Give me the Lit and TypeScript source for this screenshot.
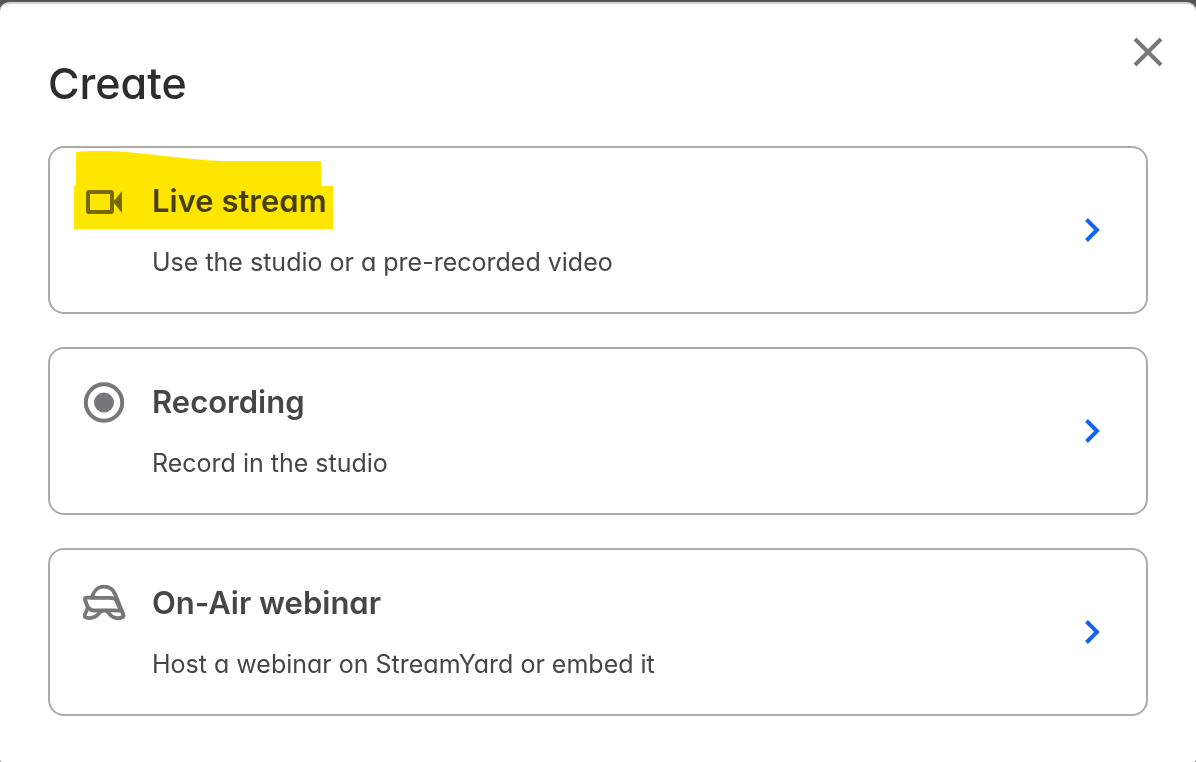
import { LitElement, html, css, svg } from "lit";
import { customElement } from "lit/decorators.js";

const camera = svg`<rect x="6" y="14" width="24" height="20" rx="1" fill="none" stroke="currentColor" stroke-width="4" /><path d="M31 24 40 13V35Z" fill="currentColor" />`;

const record = svg`<circle cx="22" cy="23.500" r="18.200" fill="none" stroke="currentColor" stroke-width="4" /><circle cx="22" cy="23.500" r="10" fill="currentColor" />`;

const turtle = svg`<g fill="none" stroke="currentColor" stroke-width="3.800" stroke-linejoin="round" stroke-linecap="round">
  <path d="M10 17.500C11.500 11 16 6.700 22 6.700C27.500 6.700 31.500 9.500 33.500 15L41 34" />
  <path d="M10 17.800H27C32 17.800 33.500 18.500 35 22C36.500 26 38 28.500 39.500 31C35 30 30 30.500 25 30.500H12C8 30.500 6 28 4.500 24C3.500 21 2.500 19.500 3 18C4.500 17 7 17.800 10 17.800Z" />
  <path d="M5.500 28C5 31.500 1.500 34.500 3 37C6 39 12 38 15 35.500C17 33.500 18 31.500 20.500 30.700" />
  <path d="M24.500 30.700C27 32 27.500 35.500 31 37C34 38.500 38 38.500 41 37C42 36 41.500 35 41 34" />
</g>`;

const items = [
  { title: "Live stream", text: "Use the studio or a pre-recorded video", icon: camera, marked: true },
  { title: "Recording", text: "Record in the studio", icon: record, marked: false },
  { title: "On-Air webinar", text: "Host a webinar on StreamYard or embed it", icon: turtle, marked: false },
];

@customElement("app-root")
export class AppRoot extends LitElement {
  static styles = css`
    :host {
      display: block;
      box-sizing: border-box;
      min-height: 100vh;
      background: #555;
      font-family: Inter, "Noto Sans", sans-serif;
      font-feature-settings: "cv11";
    }
    .dialog {
      box-sizing: border-box;
      min-height: 100vh;
      padding: 30px 48px 44px;
      border-top: 2px solid #555;
      background: #fff;
      background-clip: padding-box;
      border-radius: 10px 10px 2px 2px;
      box-shadow: inset 0 2px 0 #d4d4d4;
    }
    .header {
      display: flex;
      justify-content: space-between;
      align-items: flex-start;
      margin-right: -16px;
      height: 114px;
    }
    h1 {
      margin: 24px 0 0;
      font-size: 43px;
      line-height: 54px;
      font-weight: 550;
      color: #2d2d2e;
    }
    button {
      font: inherit;
      font-feature-settings: inherit;
      cursor: pointer;
    }
    .close {
      display: flex;
      padding: 4px 0;
      border: 0;
      background: none;
      color: #77777a;
    }
    .list {
      display: flex;
      flex-direction: column;
      gap: 33px;
    }
    .card {
      position: relative;
      display: flex;
      align-items: center;
      width: 100%;
      padding: 34px 44px 34px 32px;
      border: 2px solid #acacac;
      border-radius: 16px;
      background: #fff;
      text-align: left;
      color: #464648;
    }
    .icon {
      flex: none;
      align-self: flex-start;
      margin: -4px 26px 0 0;
      color: #77777a;
    }
    .body {
      flex: 1;
      display: flex;
      flex-direction: column;
      gap: 26px;
    }
    .title {
      font-size: 31px;
      line-height: 38px;
      font-weight: 600;
    }
    .text {
      font-size: 25px;
      line-height: 32px;
    }
    .chevron {
      flex: none;
      color: #1464f0;
    }
    .marker {
      position: absolute;
      left: 24px;
      top: 3px;
      mix-blend-mode: multiply;
      pointer-events: none;
    }
  `;

  render() {
    return html`
      <main class="dialog" role="dialog" aria-labelledby="heading">
        <header class="header">
          <h1 id="heading">Create</h1>
          <button class="close" aria-label="Close">
            <svg width="32" height="32" viewBox="0 0 32 32" fill="none" stroke="currentColor" stroke-width="4">
              <path d="M3 3 29 29M29 3 3 29" />
            </svg>
          </button>
        </header>
        <div class="list">
          ${items.map(
            (item) => html`
              <button class="card">
                <svg class="icon" width="44" height="48" viewBox="0 0 44 48" aria-hidden="true">${item.icon}</svg>
                <span class="body">
                  <span class="title">${item.title}</span>
                  <span class="text">${item.text}</span>
                </span>
                <svg class="chevron" width="20" height="28" viewBox="0 0 20 28" fill="none" stroke="currentColor" stroke-width="4" aria-hidden="true">
                  <path d="M4.500 3.500 15 14 4.500 24.500" />
                </svg>
                ${item.marked
                  ? html`<svg class="marker" width="260" height="80" viewBox="0 0 260 80" aria-hidden="true">
                      <path fill="#ffe600" d="M2 1C18 -1 46 0 62 2C88 4 118 9 147 10H247V35H259V78H0V35H2Z" />
                    </svg>`
                  : ""}
              </button>
            `,
          )}
        </div>
      </main>
    `;
  }
}
